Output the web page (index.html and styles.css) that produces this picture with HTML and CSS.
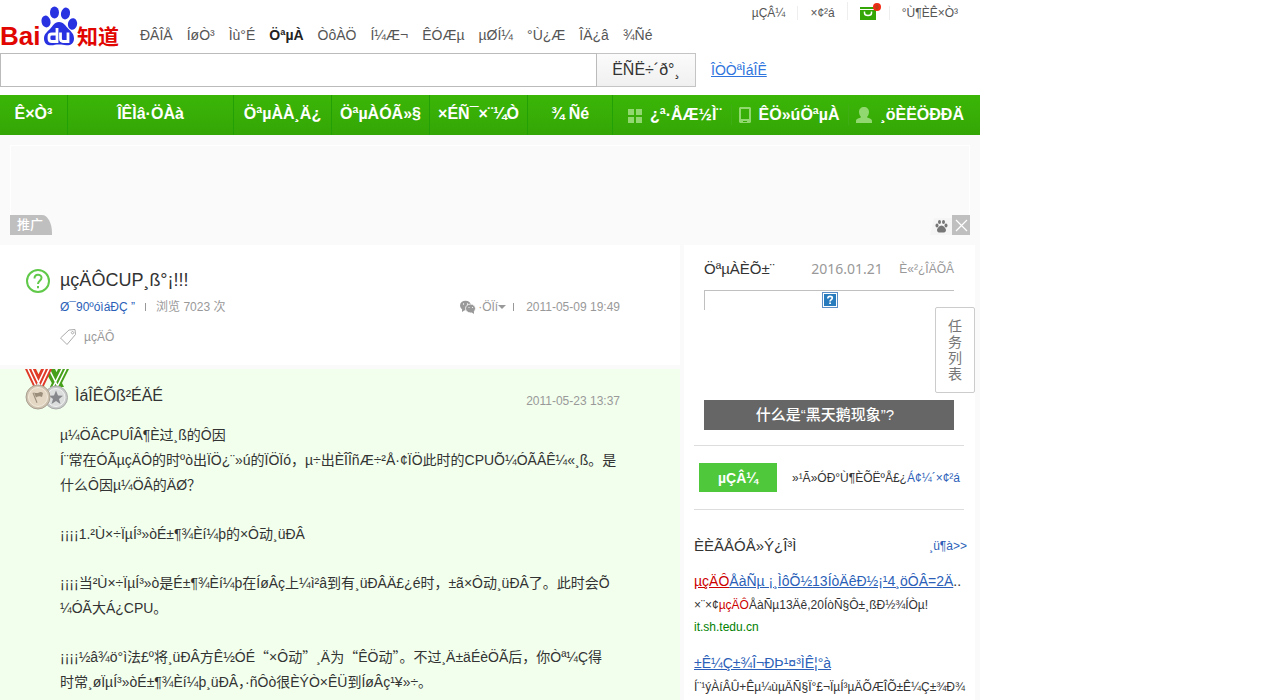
FILE: index.html
```html
<!DOCTYPE html>
<html lang="zh">
<head>
<meta charset="utf-8">
<title>µçÄÔCUP¸ß°¡!!!</title>
<link rel="stylesheet" href="styles.css">
</head>
<body>
<div class="page">
  <header class="top">
    <a class="logo" href="#" aria-label="Baidu">
      <svg width="120" height="50" viewBox="0 0 120 50">
        <g fill="#2932e1">
          <ellipse cx="46" cy="21.500" rx="4.500" ry="6" transform="rotate(-12 46 21.500)"/>
          <ellipse cx="54.500" cy="12.500" rx="4.500" ry="6"/>
          <ellipse cx="65.500" cy="13.500" rx="4.500" ry="6" transform="rotate(12 65.500 13.500)"/>
          <ellipse cx="72.500" cy="24" rx="4.600" ry="5.800" transform="rotate(12 72.500 24)"/>
          <path d="M59 22c5 0 6.500 4 9.500 7 3 3 5.500 5 5.500 9.500 0 5-3.500 7-7.500 6.800-3-.2-4.500-.8-7.500-.8s-5 .7-8 .8c-4 .1-7-2-7-6.800 0-4.500 3-6.500 6-9.500s4-7 9-7z"/>
        </g>
        <g fill="none" stroke="#fff" stroke-width="2.800">
          <path d="M57 28v13.500h-5q-3 0-3-2.800v-2q0-2.700 3-2.700h5M60.500 32.500v6q0 3 2.500 3h5v-9"/>
        </g>
        <g fill="#e10602">
          <text class="logo-latin" x="0" y="45">Bai</text>
          <text class="logo-han" x="77" y="44">知道</text>
        </g>
      </svg>
    </a>
    <nav class="channels">
      <a href="#">ÐÂÎÅ</a><a href="#">ÍøÒ³</a><a href="#">Ìù°É</a><a href="#" class="current">ÖªµÀ</a><a href="#">ÒôÀÖ</a><a href="#">Í¼Æ¬</a><a href="#">ÊÓÆµ</a><a href="#">µØÍ¼</a><a href="#">°Ù¿Æ</a><a href="#">ÎÄ¿â</a><a href="#">¾­Ñé</a>
    </nav>
    <div class="user">
      <a href="#">µÇÂ¼</a><a href="#">×¢²á</a>
      <a href="#" class="mall" aria-label="0">
        <svg width="22" height="18" viewBox="0 0 22 18"><path fill="#34a606" d="M0 5h16v2H0zM0 8h16v10H0z"/><path fill="none" stroke="#fff" stroke-width="1.500" d="M4.500 9.500v1.500q0 2.500 3.500 2.500t3.500-2.500V9.500"/><circle cx="17" cy="5" r="4" fill="#f22a16"/><ellipse cx="17" cy="5" rx="1" ry="2" fill="none" stroke="#a54819"/></svg>
      </a>
      <a href="#">°Ù¶ÈÊ×Ò³</a>
    </div>
  </header>

  <form class="search">
    <input type="text" aria-label="ËÑË÷">
    <button type="button">ËÑË÷´ð°¸</button>
    <a href="#">ÎÒÒªÌáÎÊ</a>
  </form>

  <nav class="menu">
    <a href="#" class="w-home">Ê×Ò³</a>
    <a href="#" class="w-cat">ÎÊÌâ·ÖÀà</a>
    <a href="#" class="w-std">ÖªµÀÀ¸Ä¿</a>
    <a href="#" class="w-std">ÖªµÀÓÃ»§</a>
    <a href="#" class="w-std">×ÉÑ¯×¨¼Ò</a>
    <a href="#" class="w-exp">¾ Ñé</a>
    <div class="tools">
      <a href="#"><svg width="16" height="16" viewBox="0 0 16 16"><path fill="#90d86f" d="M1 2h6v6H1zM9 2h6v6H9zM1 10h6v6H1zM9 10h6v6H9z"/></svg>¿ª·ÅÆ½Ì¨</a>
      <a href="#"><svg width="14" height="18" viewBox="0 0 14 18"><path fill="#90d86f" fill-rule="evenodd" d="M2 1h10l1 1v14l-1 1H2l-1-1V2zM3 3v10h8V3zM5 15v1h4v-1z"/></svg>ÊÖ»úÖªµÀ</a>
      <a href="#"><svg width="18" height="18" viewBox="0 0 18 18"><path fill="#90d86f" d="M9 1c3 0 5 2 5 5 0 2-1 4-2 5 0 1 5 1 5 4v2H1v-2c0-3 5-3 5-4-1-1-2-3-2-5 0-3 2-5 5-5z"/></svg>¸öÈËÖÐÐÄ</a>
    </div>
  </nav>

  <div class="body">
    <section class="ad">
      <span class="ad-label">推广</span>
      <span class="ad-tools">
        <svg class="paw" width="22" height="18" viewBox="0 0 22 18"><path fill="#f5f5f5" d="M4 1h18v17H0z"/><g fill="#777"><ellipse cx="7" cy="8.500" rx="1.500" ry="2"/><ellipse cx="9.500" cy="5" rx="1.500" ry="2"/><ellipse cx="13.500" cy="5" rx="1.500" ry="2"/><ellipse cx="16" cy="8.500" rx="1.500" ry="2"/><path d="M11.500 8.500c2 0 4.500 3 4.500 4.500 0 3-2.500 2.500-4.500 2.500S7 16 7 13c0-1.500 2.500-4.500 4.500-4.500z"/></g></svg>
        <button type="button" class="close" aria-label="×"><svg width="18" height="20" viewBox="0 0 18 20"><path stroke="#fff" stroke-width="1.200" d="M4 5l11 11M15 5L4 16"/></svg></button>
      </span>
    </section>

    <div class="columns">
      <main class="main">
        <article class="question">
          <svg class="q-icon" width="26" height="26" viewBox="0 0 26 26"><g fill="none" stroke="#60c94a" stroke-width="2"><circle cx="13" cy="13" r="11"/><path d="M9.500 10.500c0-5 7-4.500 7-.8 0 3-3.500 3-3.500 6.300"/></g><path fill="#60c94a" d="M12 18h2v2.200h-2z"/></svg>
          <div class="q-content">
            <h1>µçÄÔCUP¸ß°¡!!!</h1>
            <div class="meta">
              <a href="#">Ø¯90ºóìáÐÇ ”</a><i class="bar"></i><span>浏览 7023 次</span>
              <span class="meta-right">
                <svg width="16" height="14" viewBox="0 0 16 14"><ellipse cx="5.500" cy="5.500" rx="5.500" ry="4.800" fill="#999"/><path fill="#999" d="M2 9l0 3 3-2z"/><ellipse cx="10.500" cy="8.500" rx="5" ry="4.400" fill="#999" stroke="#fff" stroke-width=".8"/><path fill="#999" d="M11 12l3 2v-3z"/><g fill="#fff"><circle cx="3.500" cy="4" r=".7"/><circle cx="7.500" cy="4" r=".7"/><circle cx="9" cy="7.500" r=".6"/><circle cx="12.500" cy="7.500" r=".6"/></g></svg>
                <span class="share">·ÖÏí</span><i class="caret"></i><i class="bar"></i><time>2011-05-09 19:49</time>
              </span>
            </div>
            <div class="tags">
              <svg width="16" height="16" viewBox="0 0 16 16"><path fill="none" stroke="#aaa" d="M9 1l6-.5.5 5L7 15.500.500 9zM12.500 2.500a1.200 1.200 0 1 0 .1 0z"/></svg>
              <a href="#">µçÄÔ</a>
            </div>
          </div>
        </article>

        <article class="answer">
          <header class="answer-head">
            <svg width="44" height="41" viewBox="0 0 44 41">
              <path fill="#46a01a" d="M19 0h11l9 18H29zM33 0h11l-9 18H25z"/>
              <path stroke="#fff" stroke-width="1.600" d="M24 0l9 18M37 0l-9 18M41 0l-9 18"/>
              <path fill="#df3b28" d="M0 0h11l9 19H9zM16 0h11l-9 19H7z"/>
              <path stroke="#fff" stroke-width="1.600" d="M3 0l9 19M7 0l9 19M20 0l-9 19M24 0l-9 19"/>
              <circle cx="31" cy="28.500" r="11.500" fill="#c8cac9" stroke="#aaa"/><circle cx="31" cy="28.500" r="9" fill="#dcdddd" stroke="#f2f2f2"/>
              <path fill="#85878a" d="M31 21.500l2 5 5 .2-4 3.300 1.500 5-4.500-3-4.500 3 1.500-5-4-3.300 5-.2z"/>
              <circle cx="13" cy="28" r="12" fill="#cfc3b0" stroke="#aaa193"/><circle cx="13" cy="28" r="9.500" fill="#e4d8c5" stroke="#f3ebdd"/>
              <path fill="#9b8e7b" d="M7.500 24l1-.5 4 10-1 .5zM9 23.500q3 1 5 0t4 .5l-1 4q-3-1.500-6 .5z"/>
            </svg>
            <h2>ÌáÎÊÕß²ÉÄÉ</h2>
            <time>2011-05-23 13:37</time>
          </header>
          <div class="answer-text">
            <p>µ¼ÖÂCPUÎÂ¶È过¸ß的Ô­因<br>Í¨常在ÓÃµçÄÔ的时ºò出ÏÖ¿¨»ú的ÏÖÏó，µ÷出ÈÎÎñÆ÷²Å·¢ÏÖ此时的CPUÕ¼ÓÃÂÊ¼«¸ß。是<br>什么Ô­因µ¼ÖÂ的ÄØ？</p>
            <p>¡¡¡¡1.²Ù×÷ÏµÍ³»òÉ±¶¾Èí¼þ的×Ô动¸üÐÂ</p>
            <p>¡¡¡¡当²Ù×÷ÏµÍ³»ò是É±¶¾Èí¼þ在ÍøÂç上¼ì²â到有¸üÐÂÄ£¿é时，±ã×Ô动¸üÐÂ了。此时会Õ<br>¼ÓÃ大Á¿CPU。</p>
            <p>¡¡¡¡½â¾ö°ì法£º将¸üÐÂ方Ê½ÓÉ<span class="wide">“</span>×Ô动<span class="wide">”</span>¸Ä为<span class="wide">“</span>ÊÖ动<span class="wide">”</span>。不过¸Ä±äÉèÖÃ后，你Òª¼Ç得<br>时常¸øÏµÍ³»òÉ±¶¾Èí¼þ¸üÐÂ，·ñÔò很ÈÝÒ×ÊÜ到ÍøÂç¹¥»÷。</p>
          </div>
        </article>
      </main>

      <aside class="side">
        <section class="daily">
          <div class="daily-head">
            <h2>ÖªµÀÈÕ±¨</h2><time>2016.01.21</time><a href="#">È«²¿ÎÄÕÂ</a>
          </div>
          <div class="daily-pic">
            <div class="missing"><svg width="16" height="16" viewBox="0 0 16 16"><path fill="#5d8ec6" d="M0 0h16v16H0z"/><path fill="#fff" d="M1 1h14v14H1z"/><path fill="#287bbd" d="M2 2h12v12H2z"/><path fill="none" stroke="#fff" stroke-width="1.600" d="M5.800 6.500c0-3 4.500-2.500 4.500-.5 0 1.700-2.300 1.500-2.300 3.500"/><path fill="#fff" d="M7.200 10.500H9V12H7.200z"/></svg></div>
            <a href="#" class="caption">什么是“黑天鹅现象”?</a>
          </div>
        </section>
        <section class="login">
          <button type="button">µÇÂ¼</button>
          <span>»¹Ã»ÓÐ°Ù¶ÈÕËºÅ£¿<a href="#">Á¢¼´×¢²á</a></span>
        </section>
        <section class="courses">
          <div class="courses-head"><h2>ÈÈÃÅÓÅ»Ý¿Î³Ì</h2><a href="#">¸ü¶à&gt;&gt;</a></div>
          <div class="course">
            <h3><a href="#"><em>µçÄÔ</em>ÅàÑµ ¡¸ÌôÕ½13ÍòÄêÐ½¡¹4¸öÔÂ=2Ä</a>..</h3>
            <p>×¨×¢<em>µçÄÔ</em>ÅàÑµ13Äê,20ÍòÑ§Ô±¸ßÐ½¾ÍÒµ!</p>
            <p class="site">it.sh.tedu.cn</p>
          </div>
          <div class="course">
            <h3><a href="#">±Ê¼Ç±¾Î¬ÐÞ¹¤³ÌÊ¦°à</a></h3>
            <p>Í¨¹ýÀíÂÛ+Êµ¼ùµÄÑ§Ï°£¬ÏµÍ³µÄÕÆÎÕ±Ê¼Ç±¾Ð¾</p>
          </div>
        </section>
        <button type="button" class="tasks">任务列表</button>
      </aside>
    </div>
  </div>
</div>
</body>
</html>
```
FILE: styles.css
```css
* { box-sizing: border-box; }
body {
  margin: 0;
  background: #fff;
  color: #333;
  font: 12px/20px "Liberation Sans", Arial, "Noto Sans CJK SC", sans-serif;
}
h1, h2, h3, p { margin: 0; font-weight: normal; }
a { color: #2b5fb8; text-decoration: none; }
em { font-style: normal; color: #c00; }
button { font-family: inherit; cursor: pointer; }
svg { display: block; flex: none; }
.page { max-width: 980px; min-height: 100vh; display: flex; flex-direction: column; }

/* top bar */
.top { display: flex; align-items: flex-start; height: 53px; }
.logo-latin { font: bold 26px "Liberation Sans", Arial, sans-serif; }
.logo-han { font: bold 21px "Noto Sans CJK SC", sans-serif; }
.channels { display: flex; gap: 14px; padding: 25px 0 0 20px; font-size: 14px; }
.channels a { color: #555; white-space: nowrap; }
.channels .current { color: #222; font-weight: bold; }
.user { display: flex; align-items: center; margin-left: auto; padding: 6px 10px 0 0; }
.user a { color: #555; padding: 0 12px; line-height: 14px; }
.user a + a { border-left: 1px solid #eee; }
.user .mall { padding: 0 7px 0 12px; margin-top: -4px; }

/* search */
.search { display: flex; align-items: center; height: 34px; }
.search input { width: 597px; height: 34px; border: 1px solid #bbb; padding: 0 8px; font-size: 16px; }
.search button {
  height: 34px; width: 99px; padding: 0; border: 1px solid #c4c4c4; border-left: 0;
  background: linear-gradient(#fbfbfb, #f0f0f0); color: #333; font-size: 16px;
}
.search a { margin-left: 15px; font-size: 14px; color: #2f75dd; text-decoration: underline; }

/* green menu */
.menu {
  display: flex; height: 40px; margin-top: 8px;
  background: linear-gradient(#3bb607, #34a606);
  font-size: 16px; font-weight: bold; line-height: 38px;
}
.menu a { color: #fff; text-align: center; white-space: nowrap; }
.menu > a { border-right: 1px solid #22a006; }
.w-home { width: 68px; }
.w-cat { width: 166px; }
.w-std { width: 98px; }
.w-exp { width: 85px; }
.tools { flex: 1; display: flex; align-items: center; padding: 0 16px 0 14px; }
.tools a { display: flex; align-items: center; gap: 7px; height: 20px; }
.tools a + a { margin-left: auto; padding-left: 6px; border-left: 1px solid #3fae14; }

/* content */
.body { flex: 1; display: flex; flex-direction: column; padding-top: 10px; background: #fafafa; }
.ad {
  display: flex; justify-content: space-between; align-items: flex-end;
  height: 90px; margin: 0 10px 10px; border: 1px solid #fff; border-width: 1px 1px 0;
}
.ad-label {
  width: 42px; height: 20px; margin-left: -1px; padding-left: 7px;
  border-radius: 0 10px 0 0 / 0 18px 0 0; background: #bfbfbf; color: #fff;
  font-size: 13px; font-weight: 500;
}
.ad-tools { display: flex; align-items: flex-end; margin-right: -1px; }
.close { width: 18px; height: 20px; padding: 0; border: 0; background: #bfbfbf; }
.columns { flex: 1; display: flex; gap: 4px; padding-right: 5px; }
.main { flex: 1; min-width: 0; display: flex; flex-direction: column; }
.question { display: flex; gap: 9px; height: 120px; padding: 23px 60px 0 25px; background: #fff; }
.q-content { flex: 1; }
h1 { font-size: 18px; line-height: 24px; }
.meta, .meta-right { display: flex; align-items: center; color: #999; }
.meta { margin-top: 5px; }
.meta-right { margin-left: auto; }
.bar { width: 1px; height: 8px; margin: 0 10px; background: #999; }
.share { margin-left: 2px; }
.caret { border: 4px solid transparent; border-top-color: #999; border-bottom: 0; }
.meta-right .bar { margin: 0 12px 0 7px; }
.tags { display: flex; align-items: center; gap: 8px; margin-top: 10px; }
.tags a { color: #999; }
.answer { flex: 1; margin-top: 4px; padding: 0 60px 0 25px; background: #f2ffed; }
.answer-head { display: flex; align-items: flex-start; gap: 6px; height: 54px; }
.answer-head h2 { margin-top: 17px; font-size: 16px; }
.answer-head time { margin: 22px 0 0 auto; color: #999; }
.answer-text { padding-left: 35px; font-size: 14px; line-height: 25px; white-space: nowrap; }
.answer-text p + p { margin-top: 24px; }
.wide { font-family: "Noto Sans CJK SC", sans-serif; line-height: 1; }

/* sidebar */
.side { position: relative; width: 291px; padding: 0 11px 0 10px; background: #fff; }
.daily { padding: 14px 10px 15px; border-bottom: 1px solid #ddd; }
.daily-head { display: flex; align-items: center; justify-content: space-between; height: 20px; }
.daily-head h2 { font-size: 15px; }
.daily-head time { margin-left: 20px; font: 14px/20px "Noto Sans", sans-serif; color: #999; }
.daily-head a { color: #999; }
.daily-pic { margin-top: 11px; }
.missing { height: 20px; margin-bottom: 90px; padding-top: 1px; border: 1px solid silver; border-width: 1px 0 0 1px; }
.missing svg { margin: 0 auto; }
.caption { display: block; height: 30px; padding-right: 8px; background: #666; color: #fff; font-size: 15px; line-height: 30px; text-align: center; font-weight: 500; }
.login { display: flex; align-items: center; justify-content: space-between; height: 64px; padding: 0 4px 0 5px; border-bottom: 1px solid #ddd; white-space: nowrap; }
.login button { width: 78px; height: 29px; padding: 0; border: 0; background: #4fc93b; color: #fff; font-size: 14px; font-weight: bold; }
.courses { margin-right: -3px; }
.courses-head { display: flex; justify-content: space-between; padding-top: 26px; }
.courses-head h2 { font-size: 15px; }
.course { padding-top: 13px; white-space: nowrap; }
.course h3 { font-size: 14px; line-height: 25px; }
.course h3 a { text-decoration: underline; }
.course h3 em { text-decoration: underline; }
.course p { line-height: 22px; overflow: hidden; }
.course .site { color: #008000; }
.tasks {
  position: absolute; top: 62px; right: 0; width: 40px; padding: 10px 12px;
  border: 1px solid #ccc; border-radius: 2px; background: #fff;
  color: #777; font-size: 14px; line-height: 16px;
}
```
